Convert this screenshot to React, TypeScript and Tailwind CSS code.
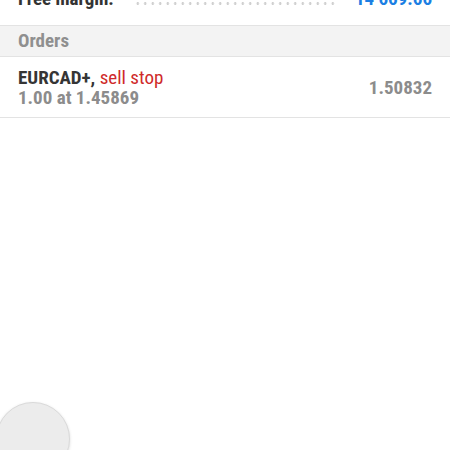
import React from "react";

const font = { fontFamily: '"Roboto Condensed", "Liberation Sans Narrow", Roboto, sans-serif' };

export default function App() {
  return (
    <div className="relative w-[450px] h-[450px] overflow-hidden bg-white" style={font}>
      <div className="-mt-[13px] h-[39px] flex items-start justify-between px-[18px] border-b border-[#e3e3e3]">
        <span className="text-[19px] leading-[24px] font-bold text-[#333333]">Free margin:</span>
        <div className="flex-1 mx-[20px] mt-[15px] h-[3px] bg-[radial-gradient(circle,#d0d0d0_1.2px,transparent_1.5px)] bg-[length:7.5px_3px]" />
        <span className="text-[19px] leading-[24px] font-bold text-[#1b7fe3]">14 669.66</span>
      </div>
      <div className="h-[31px] pt-[4px] px-[18px] bg-[#f3f3f3] border-b border-[#e3e3e3]">
        <span className="text-[19px] leading-[20px] font-bold text-[#8f8f8f]">Orders</span>
      </div>
      <div className="h-[61px] flex items-center justify-between px-[18px] pt-[2px] border-b border-[#e3e3e3]">
        <div className="flex flex-col">
          <div className="text-[19px] leading-[20px]">
            <span className="font-bold text-[#353535]">EURCAD+,</span>{" "}
            <span className="text-[#cf2a2a]">sell stop</span>
          </div>
          <div className="text-[19px] leading-[20px] font-bold text-[#8c8c8c]">1.00 at 1.45869</div>
        </div>
        <span className="text-[19px] leading-[20px] font-bold text-[#8c8c8c]">1.50832</span>
      </div>
      <div className="absolute left-[-4px] top-[402px] w-[74px] h-[74px] rounded-full bg-[#ececec] border border-[#dadada] shadow-[0_1px_3px_rgba(0,0,0,0.15)]" />
    </div>
  );
}
